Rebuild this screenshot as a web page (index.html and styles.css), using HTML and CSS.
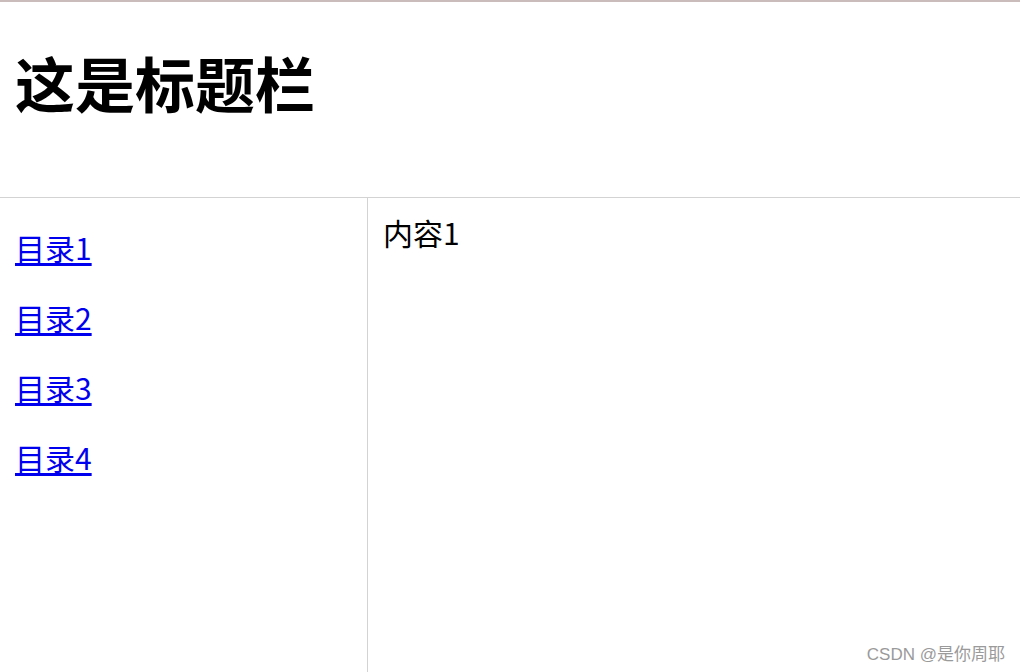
FILE: index.html
```html
<!DOCTYPE html>
<html lang="zh-CN">
<head>
<meta charset="utf-8">
<title>标题栏</title>
<link rel="stylesheet" href="styles.css">
</head>
<body>
<div class="page">
  <header class="header">
    <h1 class="title">这是标题栏</h1>
  </header>
  <div class="main">
    <nav class="sidebar">
      <a class="nav-link" href="#">目录1</a>
      <a class="nav-link" href="#">目录2</a>
      <a class="nav-link" href="#">目录3</a>
      <a class="nav-link" href="#">目录4</a>
    </nav>
    <section class="content">
      <p class="content-text">内容1</p>
    </section>
  </div>
  <div class="watermark">CSDN @是你周耶</div>
</div>
</body>
</html>
```
FILE: styles.css
```css
html, body {
  margin: 0;
  padding: 0;
  height: 100%;
  background: #ffffff;
}
body {
  font-family: "Noto Sans CJK SC", "Noto Sans", sans-serif;
  color: #000000;
}
.page {
  position: relative;
  height: 100%;
  display: flex;
  flex-direction: column;
  border-top: 2px solid #cbbcbc;
  box-sizing: border-box;
}
.header {
  height: 196px;
  border-bottom: 1px solid #d3d3d3;
  box-sizing: border-box;
  padding: 44px 0 0 15px;
}
.title {
  margin: 0;
  font-size: 60px;
  line-height: 72px;
  font-weight: 700;
}
.main {
  flex: 1;
  display: flex;
}
.sidebar {
  width: 368px;
  border-right: 1px solid #d3d3d3;
  display: flex;
  flex-direction: column;
  align-items: flex-start;
  gap: 30px;
  padding: 29px 0 0 15px;
  box-sizing: border-box;
}
.nav-link {
  font-size: 30px;
  line-height: 40px;
  color: #0000ee;
  text-decoration: underline;
  text-underline-offset: 3px;
}
.content {
  flex: 1;
  padding: 14px 0 0 15px;
}
.content-text {
  margin: 0;
  font-size: 30px;
  line-height: 40px;
}
.watermark {
  position: absolute;
  right: 15px;
  bottom: 6px;
  font-family: "Liberation Sans", "Noto Sans CJK SC", sans-serif;
  font-size: 17px;
  line-height: 22px;
  color: #9a9a9a;
}
```
